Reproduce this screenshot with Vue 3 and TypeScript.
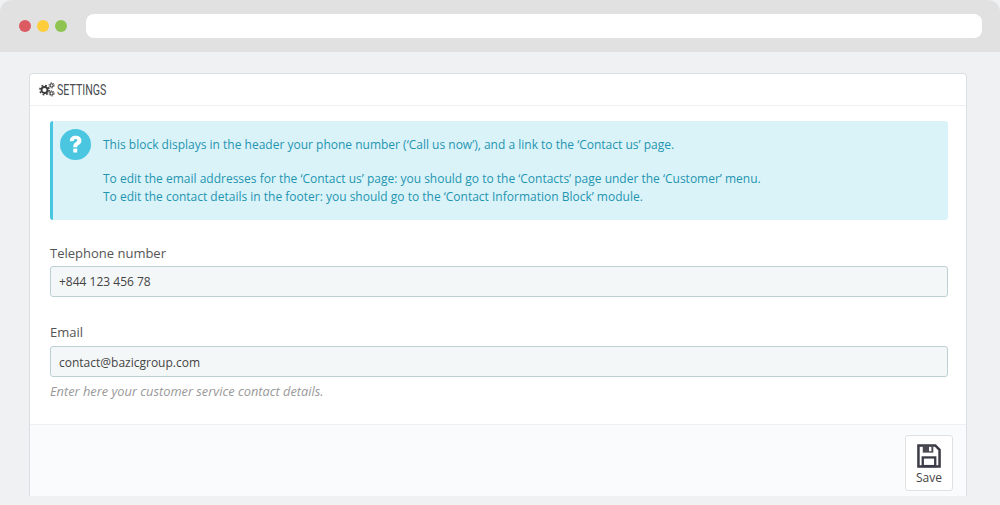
<script setup lang="ts">
const dots: string[] = ['#dc5a62', '#fdcd3c', '#90c452']
</script>

<template>
  <div class="page">
    <div class="chrome">
      <div class="dots">
        <span v-for="c in dots" :key="c" class="dot" :style="{ background: c }"></span>
      </div>
      <div class="address"></div>
    </div>
    <div class="content">
      <div class="panel">
        <div class="heading">
          <svg class="gears" width="16" height="15" viewBox="0 0 16 15" fill="none" stroke="#3a3a3a">
            <circle cx="5.500" cy="8" r="3" stroke-width="1.800" />
            <circle cx="5.500" cy="8" r="4.600" stroke-width="1.600" stroke-dasharray="1.800 1.810" />
            <circle cx="12.600" cy="3.400" r="1.600" stroke-width="1.100" />
            <circle cx="12.600" cy="3.400" r="2.600" stroke-width="1" stroke-dasharray="1.300 1.420" />
            <circle cx="12.600" cy="11.400" r="1.600" stroke-width="1.100" />
            <circle cx="12.600" cy="11.400" r="2.600" stroke-width="1" stroke-dasharray="1.300 1.420" />
          </svg>
          <span class="title">SETTINGS</span>
        </div>
        <div class="body">
          <div class="alert">
            <div class="badge">
              <svg width="31" height="31" viewBox="0 0 31 31">
                <circle cx="15.500" cy="15.500" r="15.500" fill="#4bc6e1" />
                <path d="M9.800 12.200c0-3.400 2.500-5.400 5.800-5.400 3.400 0 5.800 2 5.800 4.900 0 2.200-1.200 3.300-2.800 4.300-1.100.7-1.400 1.200-1.400 2.200h-3.900v-.9c0-2 .9-3 2.400-4 1.100-.7 1.600-1.100 1.600-2 0-.8-.7-1.400-1.700-1.400-1.100 0-1.800.7-1.900 2.100z" fill="#fff" />
                <rect x="13.300" y="19.600" width="3.900" height="3.900" fill="#fff" />
              </svg>
            </div>
            <div class="alert-text">
              <p class="first">This block displays in the header your phone number (‘Call us now’), and a link to the ‘Contact us’ page.</p>
              <p>To edit the email addresses for the ‘Contact us’ page: you should go to the ‘Contacts’ page under the ‘Customer’ menu.</p>
              <p>To edit the contact details in the footer: you should go to the ‘Contact Information Block’ module.</p>
            </div>
          </div>
          <div class="field tel">
            <label>Telephone number</label>
            <div class="input">+844 123 456 78</div>
          </div>
          <div class="field mail">
            <label>Email</label>
            <div class="input shifted">contact@bazicgroup.com</div>
            <div class="help">Enter here your customer service contact details.</div>
          </div>
        </div>
        <div class="footer">
          <button class="save" type="button">
            <svg width="24" height="24" viewBox="0 0 25 25">
              <path d="M1.500 1.500H19l4.500 4.500v17.500H1.500z" fill="none" stroke="#3b3b45" stroke-width="2.600" />
              <rect x="6" y="1.500" width="11" height="7.500" fill="#4a4a52" />
              <rect x="12.500" y="3" width="2.500" height="4.500" fill="#fff" />
              <rect x="6" y="14" width="13" height="9" fill="none" stroke="#3b3b45" stroke-width="2.400" />
            </svg>
            <span>Save</span>
          </button>
        </div>
      </div>
    </div>
  </div>
</template>

<style>
html, body { margin: 0; background: #eff1f2; }
</style>

<style scoped>
.page {
  width: 1000px;
  height: 505px;
  overflow: hidden;
  background: #eff1f2;
  font-family: "Open Sans", "Liberation Sans", sans-serif;
  display: flex;
  flex-direction: column;
}
.chrome {
  height: 52px;
  flex: none;
  background: #e1e1e1;
  border-radius: 12px 12px 0 0;
  display: flex;
  align-items: center;
  padding: 0 18px 0 19px;
  gap: 19px;
  box-sizing: border-box;
}
.dots { display: flex; gap: 6px; }
.dot { width: 12px; height: 12px; border-radius: 50%; display: block; }
.address {
  flex: 1;
  height: 24px;
  background: #fff;
  border-radius: 8px;
}
.content {
  flex: 1;
  padding: 21px 33px 9px 29px;
  display: flex;
  min-height: 0;
}
.panel {
  flex: 1;
  background: #fff;
  border: 1px solid #dcdfe1;
  border-bottom: 0;
  border-radius: 4px 4px 0 0;
  display: flex;
  flex-direction: column;
}
.heading {
  height: 32px;
  flex: none;
  box-sizing: border-box;
  border-bottom: 1px solid #eef0f1;
  display: flex;
  align-items: center;
  padding-left: 9px;
  gap: 2px;
}
.title {
  font-family: "Roboto", "Liberation Sans", sans-serif;
  font-size: 15px;
  color: #4b4b50;
  transform: scaleX(0.71);
  transform-origin: left center;
}
.body {
  flex: 1;
  padding: 15px 18px 0 20px;
}
.alert {
  height: 99px;
  box-sizing: border-box;
  background: #daf3f9;
  border-left: 3px solid #4bc6e1;
  border-radius: 3px;
  display: flex;
  padding: 8px 0 0 7px;
  gap: 12px;
}
.badge { height: 31px; flex: none; }
.alert-text {
  color: #1f95b0;
  font-size: 12px;
  line-height: 18px;
  padding-top: 7px;
}
.alert-text p { margin: 0; }
.alert-text .first { margin-bottom: 16px; }
.field label {
  display: block;
  color: #555;
  font-size: 13px;
  line-height: 18px;
  margin-bottom: 4px;
}
.tel { margin-top: 24px; }
.mail { margin-top: 26px; }
.input {
  height: 31px;
  box-sizing: border-box;
  border: 1px solid #bcd0d3;
  border-radius: 3px;
  background: #f4f7f8;
  color: #444;
  font-size: 12px;
  line-height: 29px;
  padding-left: 8px;
}
.input.shifted { line-height: 31px; }
.mail label { margin-bottom: 5px; }
.help {
  margin-top: 6px;
  font-size: 12.800px;
  line-height: 17px;
  font-style: italic;
  color: #999;
}
.footer {
  height: 72px;
  flex: none;
  box-sizing: border-box;
  background: #fafbfd;
  border-top: 1px solid #eef0f1;
  display: flex;
  justify-content: flex-end;
  padding: 10px 13px 0 0;
}
.save {
  width: 48px;
  height: 56px;
  box-sizing: border-box;
  background: #fff;
  border: 1px solid #dfe1e3;
  border-radius: 3px;
  padding: 8px 0 0;
  margin: 0;
  display: flex;
  flex-direction: column;
  align-items: center;
  gap: 2px;
  font-family: inherit;
  font-size: 12px;
  line-height: 16px;
  color: #444;
}
.save svg { display: block; }
</style>
